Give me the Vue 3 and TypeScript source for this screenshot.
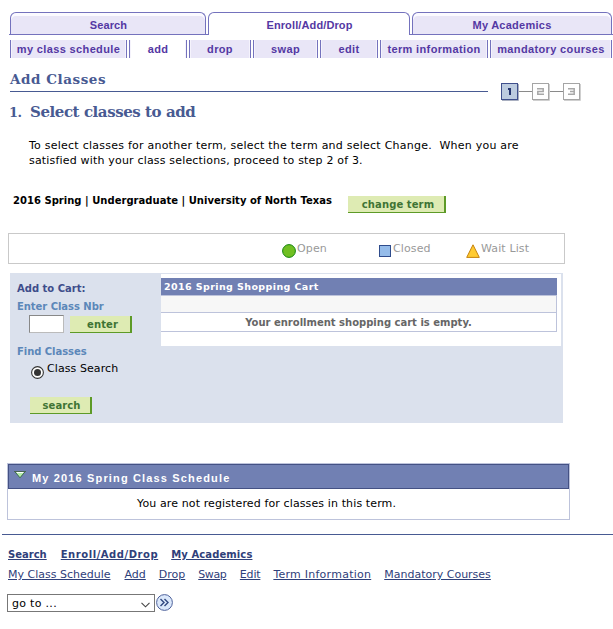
<script setup lang="ts">
import { ref } from 'vue'

interface Tab { label: string; id: string; active?: boolean }

const mainTabs: Tab[] = [
  { label: 'Search', id: 'search' },
  { label: 'Enroll/Add/Drop', id: 'enroll', active: true },
  { label: 'My Academics', id: 'academics' },
]
const subTabs: Tab[] = [
  { label: 'my class schedule', id: 'schedule' },
  { label: 'add', id: 'add', active: true },
  { label: 'drop', id: 'drop' },
  { label: 'swap', id: 'swap' },
  { label: 'edit', id: 'edit' },
  { label: 'term information', id: 'term' },
  { label: 'mandatory courses', id: 'mandatory' },
]
const footerMain: string[] = ['Search', 'Enroll/Add/Drop', 'My Academics']
const footerSub: string[] = ['My Class Schedule', 'Add', 'Drop', 'Swap', 'Edit', 'Term Information', 'Mandatory Courses']
const classNbr = ref('')
</script>

<template>
  <div class="page">
    <nav class="tabs">
      <a v-for="tab in mainTabs" :key="tab.id" class="tab" :class="[tab.id, { active: tab.active }]">{{ tab.label }}</a>
    </nav>
    <nav class="subtabs">
      <a v-for="tab in subTabs" :key="tab.id" class="subtab" :class="[tab.id, { active: tab.active }]"><span>{{ tab.label }}</span></a>
    </nav>

    <header class="title-row">
      <h1><span>Add Classes</span></h1>
      <svg class="steps" width="80" height="19" viewBox="0 0 80 19">
        <path d="M18 8.5H31M49 8.5H62M79 8.5H80" stroke="#8a8a8a" />
        <path d="M1 17.5H17.5V1" fill="none" stroke="#a9afc0" />
        <path d="M32 17.5H48.5V1M63 17.5H79.5V1" fill="none" stroke="#cfcfcf" />
        <rect x=".5" y=".5" width="16" height="16" fill="#bccbdf" stroke="#3f4f8c" />
        <rect x="31.5" y=".5" width="16" height="16" fill="#fff" stroke="#a5a5a5" />
        <rect x="62.5" y=".5" width="16" height="16" fill="#fff" stroke="#a5a5a5" />
        <path d="M7 6H9V12" fill="none" stroke="#25356f" stroke-width="2" />
        <path d="M36 5.7H42.2V8.5H36.8V11.3H43M67 5.7H73.2V11.3H67M69 8.5H73" fill="none" stroke="#a8a8a8" stroke-width="1.5" />
      </svg>
    </header>
    <h2><span class="num">1.</span><span class="step-title">Select classes to add</span></h2>
    <p class="intro"><span class="l1">To select classes for another term, select the term and select Change.&nbsp; When you are</span><br><span class="l2">satisfied with your class selections, proceed to step 2 of 3.</span></p>

    <div class="term-row">
      <strong>2016 Spring | Undergraduate | University of North Texas</strong>
      <button class="btn change">change term</button>
    </div>

    <div class="legend">
      <div class="key open"><svg width="14" height="14" viewBox="0 0 14 14"><circle cx="7" cy="7" r="6.4" fill="#70bf22" stroke="#16860f" /></svg><span>Open</span></div>
      <div class="key closed"><svg width="12" height="12" viewBox="0 0 12 12"><rect x=".5" y=".5" width="11" height="11" fill="#95bcea" stroke="#2f4c8c" /></svg><span>Closed</span></div>
      <div class="key wait"><svg width="14" height="14" viewBox="0 0 14 14"><path d="M7 .8L13.3 13.4H.7Z" fill="#ffcb31" stroke="#c5820d" /></svg><span>Wait List</span></div>
    </div>

    <main class="cart">
      <section class="cart-side">
        <div class="side-title"><span>Add to Cart:</span></div>
        <div class="side-label enter-label"><span>Enter Class Nbr</span></div>
        <div class="enter-row">
          <input v-model="classNbr" type="text" aria-label="Enter Class Nbr">
          <button class="btn enter">enter</button>
        </div>
        <div class="side-label find"><span>Find Classes</span></div>
        <label class="radio-row">
          <svg width="13" height="13" viewBox="0 0 13 13"><circle cx="6.5" cy="6.5" r="5.9" fill="#fff" stroke="#333" stroke-width="1.1" /><circle cx="6.5" cy="6.5" r="3.5" fill="#333" /></svg>
          <span>Class Search</span>
        </label>
        <button class="btn search-btn">search</button>
      </section>
      <section class="cart-main">
        <div class="cart-head"><span>2016 Spring Shopping Cart</span></div>
        <div class="cart-blank"></div>
        <div class="cart-empty"><span>Your enrollment shopping cart is empty.</span></div>
      </section>
    </main>

    <section class="schedule-box">
      <div class="schedule-head">
        <svg width="12" height="8" viewBox="0 0 12 8"><path d="M1 .8H11L6 6.8Z" fill="#b4edab" stroke="#3c6b49" /><path d="M2.5 1.5H9.5" stroke="#fff" /><path d="M0 .5H12" stroke="#4b6555" /></svg>
        <span>My 2016 Spring Class Schedule</span>
      </div>
      <div class="schedule-body"><span>You are not registered for classes in this term.</span></div>
    </section>

    <footer>
      <div class="links strong"><a v-for="(l, i) in footerMain" :key="l" :class="'m' + i">{{ l }}</a></div>
      <div class="links"><a v-for="(l, i) in footerSub" :key="l" :class="'s' + i">{{ l }}</a></div>
      <div class="goto">
        <div class="select"><span>go to ...</span><svg width="9" height="6" viewBox="0 0 9 6"><path d="M.5 .8L4.5 4.8L8.5 .8" fill="none" stroke="#444" stroke-width="1.1" /></svg></div>
        <svg width="17" height="17" viewBox="0 0 17 17"><circle cx="8.5" cy="8.5" r="7.9" fill="#dbe8fb" stroke="#4f629b" /><path d="M4.5 5L8 8.5L4.5 12M8.5 5L12 8.5L8.5 12" fill="none" stroke="#30477f" stroke-width="1.4" /></svg>
      </div>
    </footer>
  </div>
</template>

<style>
body { background: #fff; overflow: hidden; }
</style>

<style scoped>
* { box-sizing: border-box; }
.page { width: 613px; height: 629px; padding-top: 12px; overflow: hidden; font-family: "DejaVu Sans", Verdana, sans-serif; font-size: 11px; line-height: 15px; color: #000; white-space: nowrap; }
.tabs { display: flex; gap: 2px; height: 23px; margin-left: 9px; padding-left: 1px; background: linear-gradient(#7472bd, #7472bd) bottom / 100% 1px no-repeat; font: bold 11px/24px "Liberation Sans", Arial, sans-serif; letter-spacing: .12px; color: #5438a3; text-align: center; }
.tab { height: 22px; border: 1px solid #7472bd; border-bottom: 0; border-radius: 6px 6px 0 0; background: #e9e6f7; box-shadow: inset 0 3px #fbfaff; }
.tab.search { width: 196px; padding-left: 1px; }
.tab.enroll { width: 202px; padding-left: 1px; background: #fff; box-shadow: none; height: 23px; }
.tab.academics { width: 200px; letter-spacing: .25px; }
.subtabs { display: flex; gap: 2px; margin: 5px 0 0 10px; height: 18px; font: bold 11px/19px "Liberation Sans", Arial, sans-serif; letter-spacing: .36px; color: #5438a3; }
.subtab { display: flex; justify-content: center; border: solid #7472bd; border-width: 0 1px; background: #e9e6f7; box-shadow: inset 1px 0 #f5f3fc, inset -1px 0 #f5f3fc; }
.subtab.active { background: #fff; }
.schedule { width: 117px; } .add, .edit { width: 58px; } .drop { width: 62px; } .swap { width: 65px; } .term { width: 108px; } .mandatory { width: 122px; }
.title-row { display: flex; height: 43px; padding-left: 10px; color: #485a92; }
h1 { margin: 0; width: 478px; height: 34px; padding-top: 11px; border-bottom: 1px solid #485a92; font: bold 13.5px/20px "DejaVu Serif", Georgia, serif; letter-spacing: .55px; }
.steps { margin: 25px 0 0 13px; }
h2 { display: flex; margin: 0; height: 37px; padding-left: 9px; color: #485a92; font: bold 15px/23px "DejaVu Serif", Georgia, serif; letter-spacing: -.43px; }
h2 .num { width: 21px; font-size: 13px; line-height: 24px; }
.intro { margin: 0 0 0 29px; height: 56px; }
.l1 { letter-spacing: .24px; } .l2 { letter-spacing: .18px; }
.term-row { display: flex; height: 39px; padding-left: 13px; }
.term-row strong { width: 335px; font-size: 10px; line-height: 14px; letter-spacing: .02px; }
.btn { display: block; padding: 0; border: solid #5d9a27; border-width: 0 2px 1px 0; border-radius: 0; background: #deebb3; color: #3f7435; font: bold 10px/17px "DejaVu Sans", Verdana, sans-serif; letter-spacing: .1px; text-align: center; }
.change { width: 98px; height: 17px; margin-top: 2px; padding-left: 4px; }
.legend { display: flex; width: 557px; height: 31px; margin-left: 8px; border: 1px solid #c9c9c9; color: #999; letter-spacing: .12px; }
.key { display: flex; padding-top: 7px; }
.key svg { margin-top: 3px; }
.open { margin-left: 273px; width: 97px; } .open span { margin-left: 1px; } .closed { width: 87px; } .closed svg { margin: 4px 2px 0 0; } .wait span { margin-left: 1px; }
.cart { display: flex; width: 553px; height: 150px; margin: 9px 0 0 10px; background: #dbe1ed; font-weight: bold; font-size: 10px; }
.cart-side { width: 151px; padding: 8px 0 0 7px; }
.side-title { height: 18px; color: #3e4d8b; } .side-label { color: #5b87b9; letter-spacing: -.04px; } .enter-label { height: 16px; }
.enter-row { display: flex; gap: 6px; padding-left: 12px; }
input { width: 35px; height: 18px; padding: 0; border: 1px solid #bbb; border-top-color: #888; border-left-color: #888; background: #fff; }
.enter { width: 62px; height: 17px; margin-top: 1px; padding-left: 5px; }
.find { margin-top: 11px; height: 18px; }
.radio-row { display: flex; height: 35px; margin-left: 14px; font-weight: normal; font-size: 11px; line-height: 13px; letter-spacing: .08px; }
.radio-row svg { margin: 4px 3px 0 0; }
.search-btn { width: 62px; height: 17px; margin: 0 0 0 13px; padding-left: 3px; }
.cart-main { width: 400px; height: 72px; margin-top: 1px; padding: 4px 4px 0 0; background: #fff; }
.cart-head { height: 17px; padding-left: 3px; background: #7180b3; color: #fff; line-height: 18px; letter-spacing: .4px; font-size: 9.5px; }
.cart-blank { height: 18px; border: 1px solid #bdc3db; border-left: 0; background: #f7f7f7; }
.cart-empty { height: 19px; border: solid #bdc3db; border-width: 0 1px 1px 0; text-align: center; color: #666; line-height: 19px; }
.schedule-box { width: 563px; height: 57px; margin: 40px 0 0 7px; border: 1px solid #bdc3db; }
.schedule-head { display: flex; height: 25px; padding: 6px 0 0 5px; background: #7180b3; border: 1px solid #445184; color: #fff; font: bold 11px/15px "Liberation Sans", Arial, sans-serif; letter-spacing: 1.15px; }
.schedule-head svg { margin-right: 6px; }
.schedule-body { padding: 7px 0 0 129px; letter-spacing: .12px; }
footer { margin: 14px 0 0 2px; border-top: 1px solid #485a92; padding: 12px 0 0 6px; color: #2f407a; }
.links { display: flex; height: 20px; }
.links a { text-decoration: underline; margin-right: 13px; }
.strong { font-weight: bold; font-size: 10px; }
.links .m0, .links .s0 { margin-right: 14px; }
.m1 { letter-spacing: .55px; } .m2 { letter-spacing: .1px; }
.s3 { letter-spacing: -.4px; } .s4 { letter-spacing: -.2px; } .s5 { letter-spacing: .25px; }
.links .s3 { margin-right: 13.5px; }
.goto { display: flex; margin: 7px 0 0 -1px; gap: 1px; }
.select { display: flex; justify-content: space-between; width: 148px; height: 18px; border: 1px solid #777; padding: 1px 4px; color: #000; letter-spacing: .3px; }
.select svg { margin-top: 6px; }
</style>
